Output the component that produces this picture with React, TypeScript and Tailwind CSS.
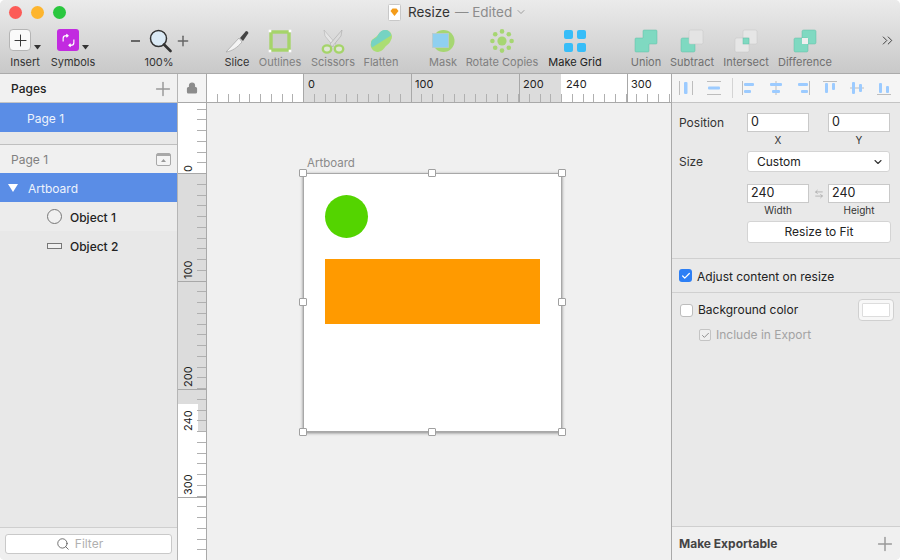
import { Check, ChevronDown, Plus, Search, ArrowLeftRight, Lock, ChevronsRight } from 'lucide-react';
import type { ReactNode } from 'react';

const TEAL = '#7fd9c1';
const TEAL_EDGE = '#63bfa6';

const Knife = () => (
  <svg width="26" height="26" viewBox="0 0 26 26">
    <path d="M2 23 L15 9 L18 13 C13 19 8 22 2 23Z" fill="#f4f4f4" stroke="#a9a9a9" strokeWidth="0.8" />
    <path d="M16 9 L22 2 Q24 2 24.5 4 L19 12Z" fill="#444" />
  </svg>
);
const Outlines = () => (
  <svg width="24" height="24" viewBox="0 0 24 24">
    <rect x="3" y="3" width="18" height="18" fill="#cdcdcd" stroke="#a6d46a" strokeWidth="3.4" />
    {[[2, 2], [22, 2], [2, 22], [22, 22]].map(([x, y]) => (
      <rect key={x * 100 + y} x={x - 1.3} y={y - 1.3} width="2.6" height="2.6" fill="#fff" />
    ))}
  </svg>
);
const Scissors = () => (
  <svg width="24" height="26" viewBox="0 0 24 26">
    <path d="M3 1 L15 15 L13 18 L4 7Z" fill="#e6e6e6" stroke="#b4b4b4" strokeWidth="0.6" />
    <path d="M21 1 L9 15 L11 18 L20 7Z" fill="#dcdcdc" stroke="#a8a8a8" strokeWidth="0.6" />
    <ellipse cx="6" cy="20" rx="4.2" ry="3.6" fill="#dfe6d6" stroke="#a5d46a" strokeWidth="2.4" />
    <ellipse cx="18" cy="20" rx="4.2" ry="3.6" fill="#dfe6d6" stroke="#a5d46a" strokeWidth="2.4" />
  </svg>
);
const Flatten = () => (
  <svg width="24" height="24" viewBox="0 0 24 24">
    <path d="M16.5 1 A6.6 6.6 0 0 1 22 11 C21 14 19 15 17 17 C15 19 14 22 9 23 A7 7 0 0 1 2 14 C2 10 5 10 8 7 C10 5 12 1 16.5 1Z" fill="#abdd74" />
    <path d="M3 18.5 C1 14 2.500 11 5 10 C7 9 8 8 9 6 C11 2 14 0.500 17 1 C19.500 1.500 21.500 3 22 6.500Z" fill="#76d3c2" />
  </svg>
);
const Mask = () => (
  <svg width="24" height="24" viewBox="0 0 24 24">
    <circle cx="12.5" cy="12" r="11" fill="#a6d672" />
    <rect x="1.500" y="4.500" width="16" height="14" fill="#8fd0f0" stroke="#b9c9cf" strokeWidth="0.8" />
  </svg>
);
const RotateCopies = () => (
  <svg width="24" height="24" viewBox="0 0 24 24">
    <circle cx="12" cy="12" r="4.6" fill="#a6d672" />
    {[0, 45, 90, 135, 180, 225, 270, 315].map((a) => (
      <circle
        key={a}
        cx={12 + 9.6 * Math.cos((a * Math.PI) / 180)}
        cy={12 + 9.6 * Math.sin((a * Math.PI) / 180)}
        r="2.3"
        fill="#a6d672"
      />
    ))}
  </svg>
);
const MakeGrid = () => (
  <svg width="24" height="24" viewBox="0 0 24 24">
    {[[1, 1], [14, 1], [1, 14], [14, 14]].map(([x, y]) => (
      <rect key={x * 100 + y} x={x} y={y} width="9" height="9" rx="2" fill="#37bdf8" />
    ))}
  </svg>
);
const Union = () => (
  <svg width="24" height="24" viewBox="0 0 24 24">
    <path d="M9 2 Q9 1 10 1 H22 Q23 1 23 2 V14 Q23 15 22 15 H15 V22 Q15 23 14 23 H2 Q1 23 1 22 V10 Q1 9 2 9 H9Z" fill={TEAL} stroke={TEAL_EDGE} strokeWidth="0.5" />
  </svg>
);
const Subtract = () => (
  <svg width="24" height="24" viewBox="0 0 24 24">
    <rect x="1" y="9" width="14" height="14" rx="1.5" fill={TEAL} stroke={TEAL_EDGE} strokeWidth="0.5" />
    <rect x="9" y="1" width="14" height="14" rx="1.5" fill="#e4e4e4" stroke="#c4c4c4" strokeWidth="0.5" />
  </svg>
);
const Intersect = () => (
  <svg width="24" height="24" viewBox="0 0 24 24">
    <rect x="9" y="1" width="14" height="14" rx="1.5" fill="#e6e6e6" stroke="#c4c4c4" strokeWidth="0.5" />
    <rect x="1" y="9" width="14" height="14" rx="1.5" fill="#e6e6e6" stroke="#c4c4c4" strokeWidth="0.5" />
    <rect x="9" y="9" width="6" height="6" fill={TEAL} stroke={TEAL_EDGE} strokeWidth="0.5" />
  </svg>
);
const Difference = () => (
  <svg width="24" height="24" viewBox="0 0 24 24">
    <rect x="9" y="1" width="14" height="14" rx="1.5" fill={TEAL} stroke={TEAL_EDGE} strokeWidth="0.5" />
    <rect x="1" y="9" width="14" height="14" rx="1.5" fill={TEAL} stroke={TEAL_EDGE} strokeWidth="0.5" />
    <rect x="9" y="9" width="6" height="6" fill="#eeeeee" />
  </svg>
);

const Caret = () => (
  <svg width="7" height="5" viewBox="0 0 7 5" className="mb-[1px]">
    <path d="M0 0 H7 L3.5 4.5Z" fill="#333" />
  </svg>
);

const InsertIcon = () => (
  <div className="flex items-end gap-[3px]">
    <div className="flex h-[22px] w-[22px] items-center justify-center rounded-[4px] border border-[#b5b5b5] bg-[#fafafa]">
      <Plus size={19} strokeWidth={1.2} className="text-[#333]" />
    </div>
    <Caret />
  </div>
);
const SymbolsIcon = () => (
  <div className="flex items-end gap-[3px]">
    <div className="flex h-[22px] w-[22px] items-center justify-center rounded-[3px] bg-[#c22be0]">
      <svg width="15" height="15" viewBox="0 0 14 14" fill="none" stroke="#fff" strokeWidth="1.1">
        <path d="M2 8 V5 Q2 2.5 5 2.5 H6 M5 1 L6.6 2.5 L5 4" />
        <path d="M12 6 V9 Q12 11.5 9 11.5 H8 M9 13 L7.4 11.5 L9 10" />
      </svg>
    </div>
    <Caret />
  </div>
);
const ZoomIcon = () => (
  <div className="ml-[4px] flex items-center">
    <span className="mr-[9px] h-[2px] w-[9px] bg-[#666]" />
    <svg width="23" height="24" viewBox="0 0 23 24">
      <circle cx="9.5" cy="9.5" r="8" fill="#dbeaf5" stroke="#333" strokeWidth="1.5" />
      <path d="M15 15.5 L21.5 22" stroke="#333" strokeWidth="2.6" strokeLinecap="round" />
    </svg>
    <Plus size={16} strokeWidth={2.2} className="ml-[3px] text-[#666]" />
  </div>
);

type Tool = { label: string; w: string; tone: string; icon: ReactNode };

const tools: Tool[] = [
  { label: 'Insert', w: 'w-[50px]', tone: 'text-[#333]', icon: <InsertIcon /> },
  { label: 'Symbols', w: 'w-[46px]', tone: 'text-[#333]', icon: <SymbolsIcon /> },
  { label: '100%', w: 'w-[126px]', tone: 'text-[#333]', icon: <ZoomIcon /> },
  { label: 'Slice', w: 'w-[30px]', tone: 'text-[#333]', icon: <Knife /> },
  { label: 'Outlines', w: 'w-[56px]', tone: 'text-[#808080]', icon: <Outlines /> },
  { label: 'Scissors', w: 'w-[50px]', tone: 'text-[#808080]', icon: <Scissors /> },
  { label: 'Flatten', w: 'w-[46px]', tone: 'text-[#808080]', icon: <Flatten /> },
  { label: 'Mask', w: 'w-[78px]', tone: 'text-[#808080]', icon: <Mask /> },
  { label: 'Rotate Copies', w: 'w-[40px]', tone: 'text-[#808080]', icon: <RotateCopies /> },
  { label: 'Make Grid', w: 'w-[106px]', tone: 'text-[#222]', icon: <MakeGrid /> },
  { label: 'Union', w: 'w-[36px]', tone: 'text-[#707070]', icon: <Union /> },
  { label: 'Subtract', w: 'w-[56px]', tone: 'text-[#707070]', icon: <Subtract /> },
  { label: 'Intersect', w: 'w-[52px]', tone: 'text-[#707070]', icon: <Intersect /> },
  { label: 'Difference', w: 'w-[66px]', tone: 'text-[#707070]', icon: <Difference /> },
];

const rulerStep = 10.75;
// ticks run off the artboard origin in both directions
const ticksFrom = (origin: number, length: number) => {
  const out: number[] = [];
  for (let p = origin % rulerStep; p < length; p += rulerStep) out.push(Math.round(p) + 0.5);
  return out;
};

function TopRuler() {
  const labels = [
    { t: '0', cls: 'left-[101px]' },
    { t: '100', cls: 'left-[208px]' },
    { t: '200', cls: 'left-[316px]' },
    { t: '240', cls: 'left-[359px]' },
    { t: '300', cls: 'left-[424px]' },
  ];
  return (
    <div className="relative h-[29px] flex-1 overflow-hidden border-b border-[#a9a9a9] bg-white">
      <div className="flex h-full">
        <div className="w-[96px]" />
        <div className="w-[258px] bg-[#dcdcdc]" />
      </div>
      <svg width="465" height="29" className="absolute left-0 top-0">
        {ticksFrom(96, 465).map((x) => (
          <line key={x} x1={x} x2={x} y1="20" y2="29" stroke="#b0b0b0" />
        ))}
        {[96, 204, 312, 420].map((x) => (
          <line key={x} x1={x + 0.5} x2={x + 0.5} y1="0" y2="29" stroke="#a8a8a8" />
        ))}
      </svg>
      {labels.map((l) => (
        <span key={l.t} className={`absolute top-[3px] text-[11px] leading-[14px] text-[#222] ${l.cls}`}>
          {l.t}
        </span>
      ))}
    </div>
  );
}

function LeftRuler() {
  const labels = [
    { t: '0', cls: 'top-[46px]' },
    { t: '100', cls: 'top-[153px]' },
    { t: '200', cls: 'top-[261px]' },
    { t: '240', cls: 'top-[305px]' },
    { t: '300', cls: 'top-[369px]' },
  ];
  return (
    <div className="relative h-full w-[29px] shrink-0 overflow-hidden border-r border-[#a9a9a9] bg-white">
      <div className="flex h-full flex-col">
        <div className="h-[70px]" />
        <div className="h-[258px] bg-[#dcdcdc]" />
      </div>
      <div className="absolute left-0 top-[301px] h-[27px] w-[20px] bg-white" />
      <svg width="28" height="457" className="absolute left-0 top-0">
        {ticksFrom(70, 457).map((y) => (
          <line key={y} x1="19" x2="28" y1={y} y2={y} stroke="#b0b0b0" />
        ))}
        {[70, 178, 286, 394].map((y) => (
          <line key={y} x1="0" x2="28" y1={y + 0.5} y2={y + 0.5} stroke="#a8a8a8" />
        ))}
      </svg>
      {labels.map((l) => (
        <span
          key={l.t}
          className={`absolute left-[-6px] flex h-[14px] w-[32px] -rotate-90 items-center justify-start text-[11px] leading-[14px] text-[#222] ${l.cls}`}
        >
          {l.t}
        </span>
      ))}
    </div>
  );
}

const Bar = ({ x, y, w, h }: { x: number; y: number; w: number; h: number }) => (
  <rect x={x} y={y} width={w} height={h} rx="1" fill="#9ccbff" />
);
const Guide = ({ d }: { d: string }) => <path d={d} stroke="#bdbdbd" strokeWidth="1" fill="none" />;

const alignIcons: { w: string; el: ReactNode }[] = [
  { w: 'w-[28px]', el: <><Guide d="M1.5 1V15M14.5 1V15" /><Bar x={6} y={2} w={3.5} h={12} /></> },
  { w: 'w-[26px]', el: <><Guide d="M1 1.5H15M1 14.5H15" /><Bar x={2} y={6.5} w={12} h={3} /></> },
  { w: 'w-[27px]', el: <><Guide d="M1.5 1V15" /><Bar x={3} y={3} w={10} h={3} /><Bar x={3} y={10} w={7} h={3} /></> },
  { w: 'w-[27px]', el: <><Guide d="M8 1V15" /><Bar x={2} y={3} w={12} h={3} /><Bar x={4} y={10} w={8} h={3} /></> },
  { w: 'w-[27px]', el: <><Guide d="M14.5 1V15" /><Bar x={3} y={3} w={10} h={3} /><Bar x={6} y={10} w={7} h={3} /></> },
  { w: 'w-[27px]', el: <><Guide d="M1 1.5H15" /><Bar x={3} y={3} w={3} h={10} /><Bar x={10} y={3} w={3} h={7} /></> },
  { w: 'w-[27px]', el: <><Guide d="M1 8H15" /><Bar x={3} y={2} w={3} h={12} /><Bar x={10} y={4} w={3} h={8} /></> },
  { w: 'w-[16px]', el: <><Guide d="M1 14.5H15" /><Bar x={3} y={3} w={3} h={10} /><Bar x={10} y={6} w={3} h={7} /></> },
];

const Field = ({ value, label, tight }: { value: string; label?: string; tight?: boolean }) => (
  <div className="flex w-[62px] flex-col items-center">
    <div className="flex h-[19px] w-full items-center border border-[#c9c9c9] bg-white px-[3px] text-[12.5px] text-[#222]">
      {value}
    </div>
    {label && <span className={`text-[10px] leading-[12px] text-[#333] ${tight ? 'mt-[1px]' : 'mt-[2px]'}`}>{label}</span>}
  </div>
);

const handles = [
  'left-[-5px] top-[-5px]',
  'left-[124px] top-[-5px]',
  'right-[-5px] top-[-5px]',
  'left-[-5px] top-[124px]',
  'right-[-5px] top-[124px]',
  'left-[-5px] bottom-[-5px]',
  'left-[124px] bottom-[-5px]',
  'right-[-5px] bottom-[-5px]',
];

export default function App() {
  return (
    <div className="flex h-[560px] w-[900px] flex-col overflow-hidden rounded-[5px] bg-[#eeeeee] font-[Inter,sans-serif] text-[#333]">
      {/* title + toolbar */}
      <div className="h-[74px] shrink-0 border-b border-[#ababab] bg-gradient-to-b from-[#ebebeb] to-[#c9c9c9]">
        <div className="flex h-[24px] items-center">
          <div className="flex w-[388px] items-center gap-[9px] pl-[9px]">
            <span className="h-[13px] w-[13px] rounded-full bg-[#fc5b57]" />
            <span className="h-[13px] w-[13px] rounded-full bg-[#fdb52e]" />
            <span className="h-[13px] w-[13px] rounded-full bg-[#2ac73f]" />
          </div>
          <svg width="13" height="17" viewBox="0 0 13 17">
            <rect x="0.5" y="0.5" width="12" height="16" rx="1" fill="#fff" stroke="#c8c8c8" />
            <path d="M2.5 7 L4.500 4.500 H8.500 L10.500 7 L6.500 12Z" fill="#f49c1a" />
          </svg>
          <span className="ml-[7px] text-[13.5px] text-[#333]">Resize</span>
          <span className="ml-[5px] text-[13.5px] text-[#8c8c8c]">— Edited</span>
          <ChevronDown size={12} strokeWidth={1.6} className="ml-[3px] text-[#8c8c8c]" />
        </div>
        <div className="flex h-[49px]">
          {tools.map((t) => (
            <div key={t.label} className={`flex shrink-0 flex-col items-center ${t.w}`}>
              <div className="flex h-[30px] items-start justify-center whitespace-nowrap pt-[5px]">{t.icon}</div>
              <span className={`mt-[1px] whitespace-nowrap text-[11px] leading-[14px] ${t.tone}`}>{t.label}</span>
            </div>
          ))}
          <div className="ml-[41px] flex h-[32px] items-center">
            <ChevronsRight size={17} strokeWidth={1.3} className="text-[#333]" />
          </div>
        </div>
      </div>

      <div className="flex min-h-0 flex-1">
        {/* pages + layers */}
        <div className="flex w-[178px] shrink-0 flex-col border-r border-[#b5b5b5] bg-[#e8e8e8]">
          <div className="flex h-[29px] items-center justify-between border-b border-[#c4c4c4] bg-[#f1f1f1] pl-[11px] pr-[3px] pt-[1px]">
            <span className="text-[12px] font-medium text-[#222]">Pages</span>
            <Plus size={22} strokeWidth={1.6} className="text-[#999]" />
          </div>
          <div className="flex h-[29px] items-center bg-[#5a8de6] pl-[27px] pt-[2px] text-[12px] text-[#eef3fc]">Page 1</div>
          <div className="h-[13px] border-b border-[#bfbfbf] bg-[#e8e8e8]" />
          <div className="flex h-[28px] items-center justify-between bg-[#f0f0f0] pl-[11px] pr-[6px]">
            <span className="pt-[2px] text-[12px] text-[#808080]">Page 1</span>
            <svg width="15" height="13" viewBox="0 0 15 13">
              <rect x="0.5" y="0.5" width="14" height="12" rx="1.5" fill="#f4f4f4" stroke="#a8a8a8" />
              <rect x="1" y="1" width="13" height="2" fill="#a8a8a8" />
              <path d="M5 9 L7.5 6 L10 9Z" fill="#999" />
            </svg>
          </div>
          <div className="flex h-[29px] items-center gap-[10px] bg-[#5a8de6] pl-[8px] text-[12px] text-[#eef3fc]">
            <svg width="10" height="8" viewBox="0 0 10 8">
              <path d="M0 0 H10 L5 8Z" fill="#fff" />
            </svg>
            <span className="pt-[2px]">Artboard</span>
          </div>
          <div className="flex h-[29px] items-center bg-[#ececec] text-[12px] font-medium text-[#222]">
            <div className="flex w-[70px] justify-end pr-[8px]">
              <span className="h-[15px] w-[15px] rounded-full border border-[#777] bg-[#f0f0f0]" />
            </div>
            <span className="pt-[2px]">Object 1</span>
          </div>
          <div className="flex h-[29px] items-center bg-[#e8e8e8] text-[12px] font-medium text-[#222]">
            <div className="flex w-[70px] justify-end pr-[8px]">
              <span className="h-[6px] w-[15px] border border-[#777] bg-[#f0f0f0]" />
            </div>
            <span className="pt-[2px]">Object 2</span>
          </div>
          <div className="flex-1" />
          <div className="flex h-[33px] items-center justify-center border-t border-[#cfcfcf] bg-[#efefef] px-[5px]">
            <div className="flex h-[20px] w-full items-center justify-center gap-[5px] rounded-[3px] border border-[#c9c9c9] bg-white pr-[18px]">
              <Search size={14} strokeWidth={1.4} className="text-[#555]" />
              <span className="text-[12px] text-[#b0b0b0]">Filter</span>
            </div>
          </div>
        </div>

        {/* rulers + canvas */}
        <div className="flex min-w-0 flex-1 flex-col">
          <div className="flex h-[29px] shrink-0">
            <div className="flex w-[29px] shrink-0 items-center justify-center border-b border-r border-[#a9a9a9] bg-[#f4f4f4]">
              <Lock size={12} strokeWidth={2.4} className="text-[#8c8c8c]" fill="#8c8c8c" />
            </div>
            <TopRuler />
          </div>
          <div className="flex min-h-0 flex-1">
            <LeftRuler />
            <div className="relative flex-1 bg-[#f0f0f0]">
              <span className="absolute left-[100px] top-[53px] text-[11.5px] leading-[14px] text-[#8a8a8a]">Artboard</span>
              <div className="absolute left-[96px] top-[70px] h-[259px] w-[259px] border border-[#a8a8a8] bg-white shadow-[0_1px_3px_rgba(0,0,0,0.45)]">
                <div className="absolute left-[21px] top-[21px] h-[43px] w-[43px] rounded-full bg-[#54d400]" />
                <div className="absolute left-[21px] top-[85px] h-[65px] w-[215px] bg-[#ff9a00]" />
                {handles.map((h) => (
                  <span key={h} className={`absolute h-[8px] w-[8px] rounded-[1px] border border-[#a0a0a0] bg-white ${h}`} />
                ))}
              </div>
            </div>
          </div>
        </div>

        {/* inspector */}
        <div className="flex w-[229px] shrink-0 flex-col border-l border-[#a9a9a9] bg-[#e9e9e9]">
          <div className="flex h-[29px] shrink-0 items-center border-b border-[#c4c4c4] bg-[#f5f5f5] pl-[6px]">
            {alignIcons.map((a, i) => (
              <div key={i} className="flex shrink-0 items-center">
                <div className={`flex shrink-0 justify-start ${a.w}`}>
                  <svg width="16" height="16" viewBox="0 0 16 16">
                    {a.el}
                  </svg>
                </div>
                {i === 1 && <span className="mr-[8px] h-[20px] w-[1px] bg-[#d4d4d4]" />}
              </div>
            ))}
          </div>

          <div className="flex h-[156px] shrink-0 flex-col border-b border-[#d0d0d0] pl-[7px] pr-[10px] pt-[10px]">
            <div className="flex">
              <span className="w-[68px] pt-[1px] text-[12px] text-[#333]">Position</span>
              <div className="flex gap-[19px]">
                <Field value="0" label="X" />
                <Field value="0" label="Y" />
              </div>
            </div>
            <div className="mt-[5px] flex items-center">
              <span className="w-[68px] text-[12px] text-[#333]">Size</span>
              <div className="flex h-[21px] w-[143px] items-center justify-between rounded-[3px] border border-[#d4d4d4] bg-white pl-[9px] pr-[5px] text-[12px] text-[#222]">
                Custom
                <ChevronDown size={12} strokeWidth={2.2} className="text-[#333]" />
              </div>
            </div>
            <div className="ml-[68px] mt-[12px] flex">
              <Field value="240" label="Width" tight />
              <div className="flex h-[19px] w-[19px] items-center justify-center">
                <ArrowLeftRight size={10} strokeWidth={1.5} className="text-[#999]" />
              </div>
              <Field value="240" label="Height" tight />
            </div>
            <div className="ml-[68px] mt-[5px] flex h-[22px] w-[144px] items-center justify-center rounded-[3px] border border-[#d4d4d4] bg-white text-[12px] text-[#222]">
              Resize to Fit
            </div>
          </div>

          <div className="flex h-[34px] shrink-0 items-center gap-[5px] border-b border-[#d0d0d0] pl-[7px] text-[12px] text-[#222]">
            <span className="flex h-[13px] w-[13px] items-center justify-center rounded-[3px] bg-[#2d7ff5]">
              <Check size={10} strokeWidth={3} className="text-white" />
            </span>
            <span className="pt-[2px]">Adjust content on resize</span>
          </div>

          <div className="flex h-[33px] shrink-0 items-center pl-[8px] pr-[6px] pt-[1px] text-[12px] text-[#222]">
            <span className="mr-[5px] h-[13px] w-[13px] rounded-[3px] border border-[#bdbdbd] bg-white" />
            Background color
            <div className="ml-auto flex h-[22px] w-[36px] items-center justify-center rounded-[4px] border border-[#d0d0d0] bg-[#f7f7f7]">
              <span className="h-[14px] w-[28px] rounded-[1px] border border-[#dddddd] bg-white" />
            </div>
          </div>
          <div className="flex h-[18px] shrink-0 items-center gap-[5px] pl-[27px] text-[12px] text-[#a3a3a3]">
            <span className="flex h-[12px] w-[12px] items-center justify-center rounded-[2px] border border-[#c4c4c4] bg-[#efefef]">
              <Check size={9} strokeWidth={2.5} className="text-[#888]" />
            </span>
            Include in Export
          </div>

          <div className="flex-1" />
          <div className="flex h-[34px] shrink-0 items-center justify-between border-t border-[#cfcfcf] bg-[#f0f0f0] pl-[7px] pr-[4px]">
            <span className="text-[12px] font-bold text-[#444]">Make Exportable</span>
            <Plus size={22} strokeWidth={1.6} className="text-[#999]" />
          </div>
        </div>
      </div>
    </div>
  );
}
